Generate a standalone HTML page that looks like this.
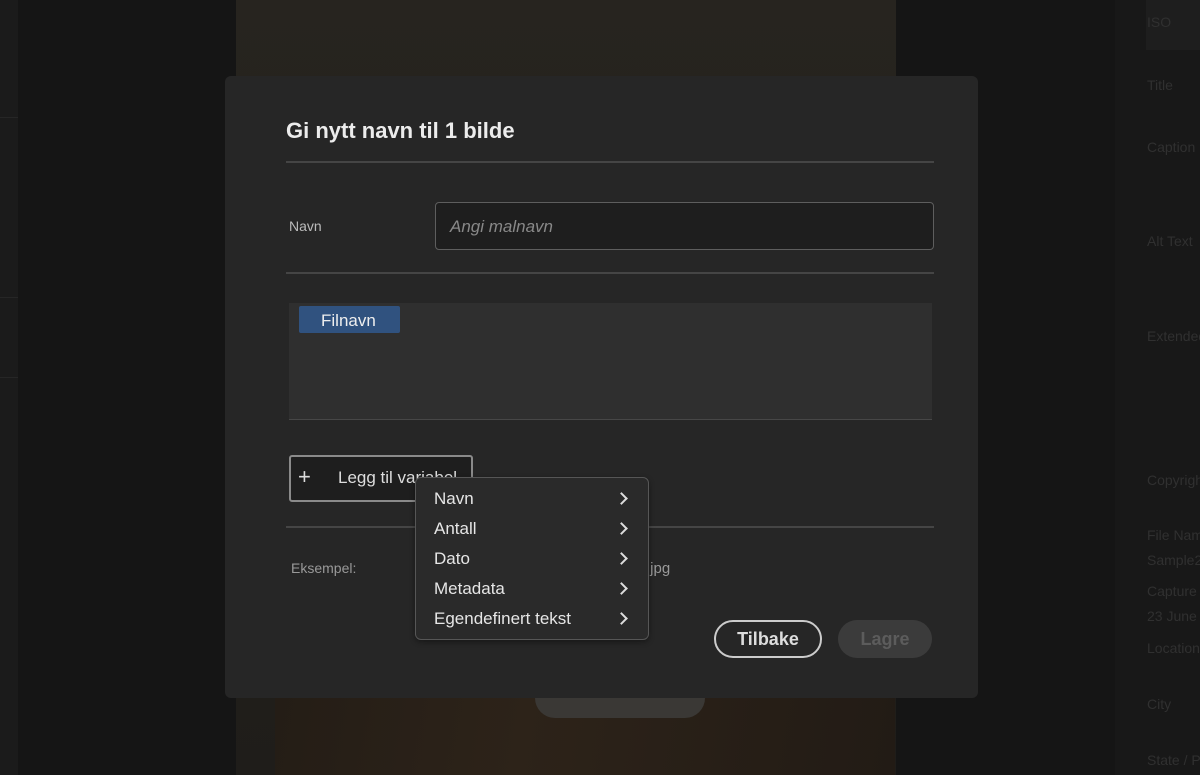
<!DOCTYPE html>
<html><head><style>
*{margin:0;padding:0;box-sizing:border-box}
html,body{width:1200px;height:775px;overflow:hidden}
body{background:#151515;font-family:"Liberation Sans",sans-serif;position:relative}
.abs{position:absolute;white-space:nowrap}
.rl{position:absolute;left:1147px;color:#303030;font-size:14px;white-space:nowrap}
.mi{position:absolute;left:434px;color:#e6e6e6;font-size:17px}
.ch{position:absolute;left:617px;width:9px;height:9px;border-right:2px solid #ddd;border-top:2px solid #ddd;transform:rotate(45deg)}
</style></head><body>
<div class="abs" style="left:0;top:0;width:18px;height:775px;background:#1b1b1b"></div>
<div class="abs" style="left:0;top:117px;width:18px;height:1px;background:#262626"></div>
<div class="abs" style="left:0;top:297px;width:18px;height:1px;background:#262626"></div>
<div class="abs" style="left:0;top:377px;width:18px;height:1px;background:#262626"></div>
<div class="abs" style="left:236px;top:0;width:660px;height:775px;background:linear-gradient(#27241f,#1f1d1a)"></div>
<div class="abs" style="left:275px;top:698px;width:620px;height:77px;background:linear-gradient(100deg,#241d16,#2d2319 40%,#221b15)"></div>
<div class="abs" style="left:535px;top:698px;width:170px;height:20px;background:#3a3835;border-radius:0 0 80px 80px"></div>
<div class="abs" style="left:1115px;top:0;width:85px;height:775px;background:#181818;overflow:hidden">
<div class="abs" style="left:31px;top:0;width:60px;height:50px;background:#1e1e1e"></div>
</div>
<div class="rl" style="top:14px">ISO</div>
<div class="rl" style="top:77px">Title</div>
<div class="rl" style="top:139px">Caption</div>
<div class="rl" style="top:233px">Alt Text</div>
<div class="rl" style="top:328px">Extended</div>
<div class="rl" style="top:472px">Copyright</div>
<div class="rl" style="top:527px">File Name</div>
<div class="rl" style="top:552px">Sample2</div>
<div class="rl" style="top:583px">Capture</div>
<div class="rl" style="top:608px">23 June</div>
<div class="rl" style="top:640px">Location</div>
<div class="rl" style="top:696px">City</div>
<div class="rl" style="top:752px">State / P</div>

<div class="abs" style="left:225px;top:76px;width:753px;height:622px;background:#262626;border-radius:6px"></div>
<div class="abs" style="left:286px;top:118px;color:#ececec;font-size:22px;font-weight:bold">Gi nytt navn til 1 bilde</div>
<div class="abs" style="left:286px;top:161px;width:648px;height:2px;background:#454545"></div>
<div class="abs" style="left:289px;top:218px;color:#bbb;font-size:14px">Navn</div>
<div class="abs" style="left:435px;top:202px;width:499px;height:48px;background:#1e1e1e;border:1px solid #5e5e5e;border-radius:4px"></div>
<div class="abs" style="left:450px;top:217px;color:#888;font-size:17px;font-style:italic">Angi malnavn</div>
<div class="abs" style="left:286px;top:272px;width:648px;height:2px;background:#454545"></div>
<div class="abs" style="left:289px;top:303px;width:643px;height:117px;background:#2f2f2f;border-bottom:1px solid #474747"></div>
<div class="abs" style="left:299px;top:306px;width:101px;height:27px;background:#30527f;border-radius:2px"></div>
<div class="abs" style="left:321px;top:311px;color:#eee;font-size:17px">Filnavn</div>
<div class="abs" style="left:289px;top:455px;width:184px;height:47px;background:#1e1e1e;border:2px solid #8a8a8a;border-radius:3px"></div>
<div class="abs" style="left:298px;top:464px;color:#ddd;font-size:22px">+</div>
<div class="abs" style="left:338px;top:468px;color:#ddd;font-size:17px">Legg til variabel</div>
<div class="abs" style="left:286px;top:526px;width:648px;height:2px;background:#454545"></div>
<div class="abs" style="left:291px;top:560px;color:#999;font-size:14px">Eksempel:</div>
<div class="abs" style="left:646px;top:560px;color:#999;font-size:15px">.jpg</div>
<div class="abs" style="left:714px;top:620px;width:108px;height:38px;border:2px solid #ccc;border-radius:19px;color:#ddd;font-size:18px;font-weight:bold;text-align:center;line-height:34px">Tilbake</div>
<div class="abs" style="left:838px;top:620px;width:94px;height:38px;background:#3b3b3b;border-radius:19px;color:#5c5c5c;font-size:18px;font-weight:bold;text-align:center;line-height:38px">Lagre</div>

<div class="abs" style="left:415px;top:477px;width:234px;height:163px;background:#2a2a2a;border:1px solid #565656;border-radius:6px;box-shadow:0 2px 6px rgba(0,0,0,.4)"></div>
<div class="mi" style="top:489px">Navn</div><div class="ch" style="top:494px"></div>
<div class="mi" style="top:519px">Antall</div><div class="ch" style="top:524px"></div>
<div class="mi" style="top:549px">Dato</div><div class="ch" style="top:554px"></div>
<div class="mi" style="top:579px">Metadata</div><div class="ch" style="top:584px"></div>
<div class="mi" style="top:609px">Egendefinert tekst</div><div class="ch" style="top:614px"></div>
</body></html>
